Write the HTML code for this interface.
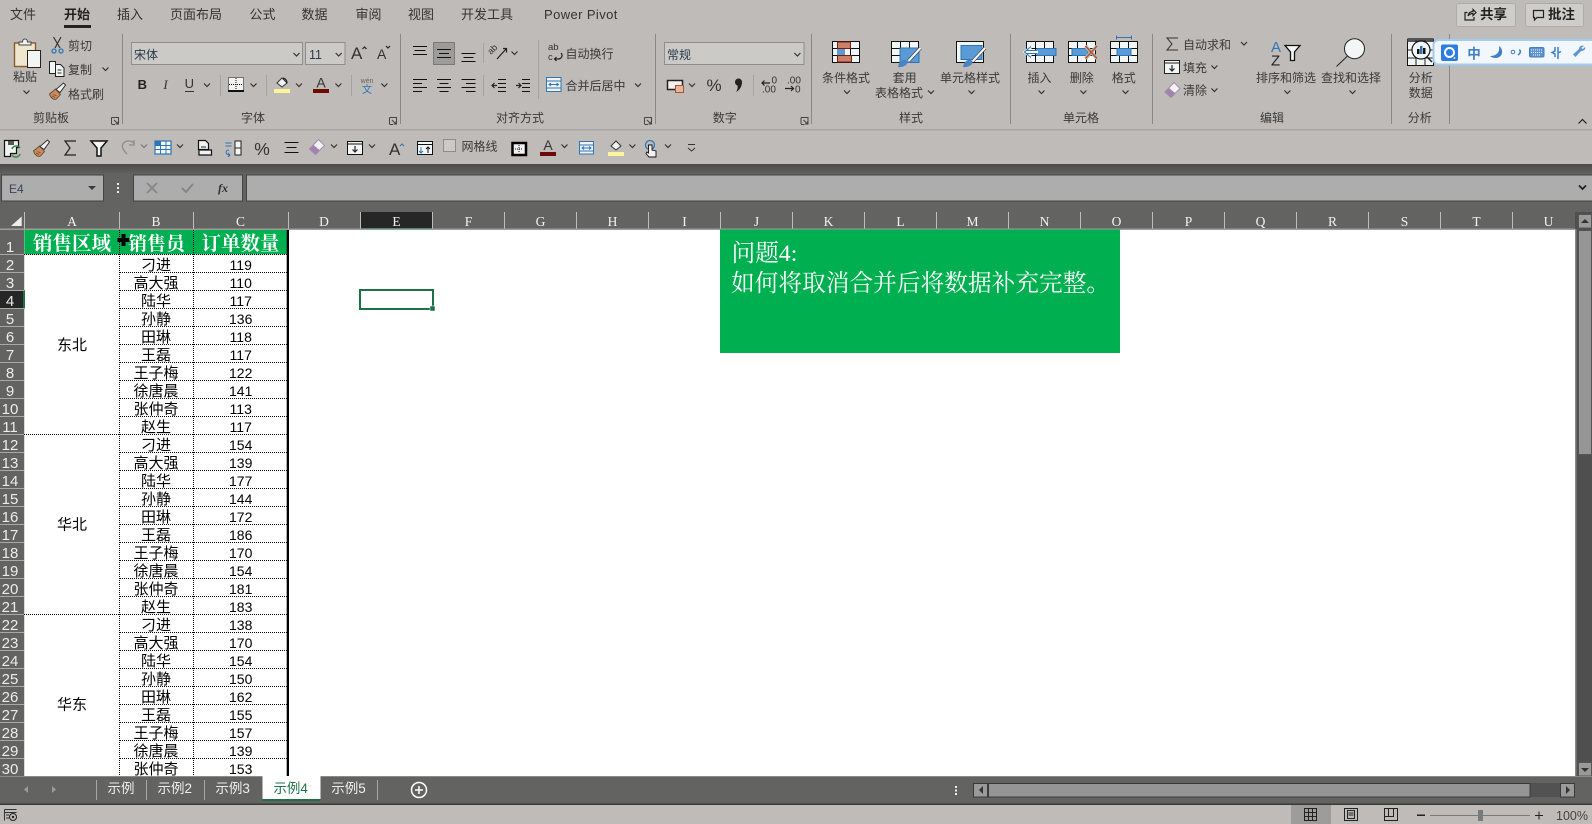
<!DOCTYPE html>
<html lang="zh"><head><meta charset="utf-8"><title>Excel</title>
<style>
html,body{margin:0;padding:0;width:1592px;height:824px;overflow:hidden;background:#bfbbb8}
svg{display:block;position:absolute;left:0;top:0}
text{font-family:"Liberation Sans","Noto Sans CJK SC",sans-serif}
.t{font-size:13px;fill:#333}
.r{font-size:12px;fill:#3a3a3a}
.m{text-anchor:middle}
.ch{font-family:"Liberation Serif",serif;font-size:13.5px;fill:#f2f2f2;text-anchor:middle}
.rh{font-size:15px;fill:#ececec;text-anchor:middle}
.cj{font-family:"WenQuanYi Zen Hei","Noto Sans CJK SC",sans-serif;font-size:15px;fill:#000;text-anchor:middle}
.nu{font-size:14px;fill:#000;text-anchor:middle}
.hd{font-family:"Liberation Serif","Noto Serif CJK SC",serif;font-weight:700;font-size:19.5px;fill:#fff;text-anchor:middle}
.gb{font-family:"Noto Serif CJK SC",serif;font-size:23.7px;fill:#fff}
.tb{font-size:13.5px;fill:#efefef;text-anchor:middle}
.l{stroke:#222;stroke-width:1.2;fill:none}
.k{stroke:#111;fill:none}
</style></head><body>
<svg width="1592" height="824" viewBox="0 0 1592 824" xmlns="http://www.w3.org/2000/svg">
<defs>
<path id="c" d="M-3 -1.500L0 1.500L3 -1.500" fill="none" stroke="#333" stroke-width="1.200"/>
<linearGradient id="sh" x1="0" y1="0" x2="0" y2="1"><stop offset="0" stop-color="#4a4a4a"/><stop offset="1" stop-color="#636362"/></linearGradient>
<path id="dl" d="M0.500 0.500H7.500V7.500M0.500 0.500V7M0.500 7.500H4M3 3L7 7M4.500 7H7V4.500" fill="none" stroke="#444" stroke-width="1"/>
<g id="br"><path d="M0 8l6-5 5 5.500-4 4.500c-3 1.500-6-1.500-7-5z" fill="#c98a5d" stroke="#6b4a32" stroke-width=".9"/><path d="M4 8.500l3 1.500M2.500 10l3 1.500" stroke="#7a4f30" stroke-width=".8"/><path d="M6.500 3.500l7.500-6.500 2 2-5.500 7.500z" fill="#f2f2f2" stroke="#333"/></g>
</defs>

<!-- backgrounds -->
<rect width="1592" height="824" fill="#bfbbb8"/>
<rect y="129" width="1592" height="1.500" fill="#a8a6a3"/>
<rect y="164" width="1592" height="48" fill="#636362"/>
<rect y="164" width="1592" height="10" fill="url(#sh)"/>

<!-- tabs -->
<text class="t" x="10" y="19">文件</text>
<text class="t" x="64" y="19" style="font-weight:700;fill:#222">开始</text>
<rect x="64" y="25" width="27" height="3" fill="#222"/>
<text class="t" x="117" y="19">插入</text>
<text class="t" x="170" y="19">页面布局</text>
<text class="t" x="249.500" y="19">公式</text>
<text class="t" x="301.500" y="19">数据</text>
<text class="t" x="355.500" y="19">审阅</text>
<text class="t" x="408" y="19">视图</text>
<text class="t" x="461" y="19">开发工具</text>
<text class="t" x="544" y="19" style="letter-spacing:.4px">Power Pivot</text>

<!-- share -->
<rect x="1456.500" y="3.500" width="59" height="23" rx="2" fill="#cfcdca" stroke="#aeaca9"/>
<rect x="1525.500" y="3.500" width="58" height="23" rx="2" fill="#cfcdca" stroke="#aeaca9"/>
<path d="M1467.500 12.500h-2.500v7.500h9v-3M1468 16c.5-3 2.500-4.500 5-4.500v-2l3 3-3 3v-2c-2 0-4 1-5 2.500" class="l" stroke-width="1"/>
<path d="M1533.500 10.500h10v7h-6.500l-2.500 2.500v-2.500h-1z" class="l"/>
<text x="1480" y="19" style="font-size:13.500px;font-weight:700;fill:#222">共享</text>
<text x="1548" y="19" style="font-size:13.500px;font-weight:700;fill:#222">批注</text>

<!-- group separators -->
<g stroke="#8a8886" stroke-width="1">
<path d="M122.500 34V124M400.500 34V124M655.500 34V124M811.500 34V124M1010.500 34V124M1152.500 34V124M1391.500 34V124M1449.500 34V124"/>
<path d="M220.500 75V96M266.500 75V96M351.500 75V96M483.500 43V63M483.500 75V96M538.500 40V99M753.500 75V96" stroke="#a5a3a0"/>
</g>

<!-- clipboard -->
<rect x="14.500" y="43" width="21" height="23.500" fill="#efe6cf" stroke="#8c5a2a" stroke-width="1.400"/>
<path d="M19 45v-3h3.500c0-4 5-4 5 0h3.500v3z" fill="#f2f2f2" stroke="#444" stroke-width="1"/>
<rect x="27.500" y="50.500" width="13" height="17" fill="#f3f5f5" stroke="#222"/>
<text class="r m" x="25" y="81">粘贴</text>
<use href="#c" x="26.500" y="92"/>
<path d="M53.500 37L60 48M61 37L55 48" stroke="#333" stroke-width="1.200" fill="none"/>
<circle cx="54" cy="51" r="2" fill="none" stroke="#2e75b6" stroke-width="1.300"/><circle cx="61" cy="51" r="2" fill="none" stroke="#2e75b6" stroke-width="1.300"/>
<text class="r" x="68" y="50">剪切</text>
<path d="M49.500 61.500h6v12h-6zM55.500 64.500h5l3.500 3.500v8.500h-8.500z" fill="#f3f5f5" stroke="#222"/><path d="M57.500 70h4M57.500 73h4" stroke="#333"/>
<text class="r" x="68" y="74">复制</text><use href="#c" x="105.500" y="69"/>
<use href="#br" x="49.500" y="86"/>
<text class="r" x="68" y="98.500">格式刷</text>

<!-- font -->
<rect x="131.500" y="42.500" width="171" height="22" fill="#cbcac7" stroke="#908e8c"/>
<rect x="305.500" y="42.500" width="39.500" height="22" fill="#cbcac7" stroke="#908e8c"/>
<text x="134" y="59" style="font-size:12px;fill:#2b3a4a">宋体</text><use href="#c" x="296.500" y="54.500"/>
<text x="309" y="59" style="font-size:12.500px;fill:#2b3a4a">11</text><use href="#c" x="338.700" y="54.500"/>
<text x="351" y="59" style="font-size:17px;fill:#333">A</text><path d="M362.500 49l2-2 2 2" class="l" stroke="#2e75b6" stroke-width="1"/>
<text x="377" y="59" style="font-size:14px;fill:#333">A</text><path d="M386 46l2 2 2-2" class="l" stroke="#2e75b6" stroke-width="1"/>
<text class="m" x="142.300" y="89" style="font-size:13px;font-weight:700;fill:#222">B</text>
<text class="m" x="165.600" y="89" style="font-size:13px;font-style:italic;fill:#333;font-family:'Liberation Serif',serif">I</text>
<text class="m" x="189.300" y="88" style="font-size:13px;fill:#333">U</text><path d="M185 91.500h9" stroke="#333"/>
<use href="#c" x="207" y="85"/>
<rect x="228.500" y="77.500" width="15" height="14" fill="#f2f2f2" stroke="#111" stroke-dasharray="1 1"/><path d="M236 78v13M229 84.500h14" stroke="#111" stroke-dasharray="1 1"/><rect x="228" y="90" width="16" height="2" fill="#111"/>
<use href="#c" x="253.500" y="85"/>
<path d="M277 83l5-5 5 5-5 4z" fill="#f2f2f2" stroke="#333"/><path d="M283 78c3 1 4 3 4 5" class="l" stroke="#2e75b6"/>
<rect x="274" y="89" width="16" height="4" fill="#fbf59e"/><use href="#c" x="299" y="85"/>
<text class="m" x="321" y="87.500" style="font-size:14px;fill:#333">A</text><rect x="313" y="89" width="16" height="4" fill="#6e0b00"/><use href="#c" x="338.400" y="85"/>
<text class="m" x="367" y="83" style="font-size:7px;fill:#666">wén</text><text class="m" x="367" y="93" style="font-size:10px;fill:#2e75b6">文</text><use href="#c" x="384.400" y="85"/>
<use href="#dl" x="111" y="117"/><use href="#dl" x="389" y="117"/><use href="#dl" x="644" y="117"/><use href="#dl" x="800.500" y="117"/>

<!-- alignment -->
<rect x="433.500" y="42.500" width="21" height="22" fill="#9e9c9a" stroke="#7b7a78"/>
<path class="k" d="M413 46.500h14M414.500 50.500h11M413 54.500h14M437 49.500h14M439 53.500h10M437 57.500h14M461.500 53.500h14M463.500 57.500h10M461.500 61.500h14"/>
<path class="k" d="M413 79.500h14M413 83.500h9M413 87.500h14M413 91.500h9M437 79.500h14M439.500 83.500h9M437 87.500h14M439.500 91.500h9M461.500 79.500h14M466 83.500h9.500M461.500 87.500h14M466 91.500h9.500"/>
<path d="M497 59l9-10M503 48.500h3.500v4" class="l" stroke="#2e75b6"/><text x="491" y="55" transform="rotate(-45 491 55)" style="font-size:9px;fill:#333">ab</text><use href="#c" x="514.500" y="53"/>
<path class="k" d="M498 79.500h8M498 83.500h8M498 87.500h8M498 91.500h8"/><path d="M497 85.500h-5M494.500 83l-2.500 2.500 2.500 2.500" class="l" stroke="#2e75b6"/>
<path class="k" d="M522 79.500h8M522 83.500h8M522 87.500h8M522 91.500h8"/><path d="M516 85.500h5M518.500 83l2.500 2.500-2.500 2.500" class="l" stroke="#2e75b6"/>
<text x="548" y="50" style="font-size:9.500px;fill:#333">ab</text><text x="548" y="60" style="font-size:9.500px;fill:#333">c</text>
<path d="M561 53c2 2 1 6-3 6h-3M556.500 57l-2 2 2 2" class="l" stroke="#2e75b6"/>
<text class="r" x="565.500" y="58">自动换行</text>
<rect x="546.500" y="77.500" width="14.500" height="14" fill="#f2f2f2" stroke="#2e75b6"/><path d="M546.500 81h14.500M546.500 88h14.500M549 84.500h9.500M551 83l-2 1.500 2 1.500M556.500 83l2 1.500-2 1.500" stroke="#2e75b6" fill="none"/>
<text class="r" x="565.500" y="90">合并后居中</text><use href="#c" x="638" y="85"/>

<!-- number -->
<rect x="664.500" y="42.500" width="139.500" height="22" fill="#cbcac7" stroke="#908e8c"/>
<text x="667" y="59" style="font-size:12px;fill:#2b3a4a">常规</text><use href="#c" x="797.400" y="54.500"/>
<rect x="667.500" y="80.500" width="15" height="9" fill="#f2f2f2" stroke="#222" stroke-width="1.500"/><rect x="675.500" y="85.500" width="8" height="7" fill="#e0b8a0" stroke="#b0502a"/><use href="#c" x="692" y="85"/>
<text class="m" x="714" y="91" style="font-size:17px;fill:#333">%</text>
<path d="M735 82a3.500 3.500 0 1 1 7 0c0 4-2 8-6 10 1.500-2.500 2-4 1.500-6.500a3.500 3.500 0 0 1-2.500-3.500z" fill="#222"/>
<text x="771.500" y="83.500" style="font-size:10px;fill:#333">0</text><text x="762" y="92.500" style="font-size:10px;fill:#333">.00</text><path d="M770 83h-8M764.500 80.500l-2.500 2.500 2.500 2.500" class="l" stroke="#2e75b6"/>
<text x="787" y="83.500" style="font-size:10px;fill:#333">.00</text><text x="795" y="92.500" style="font-size:10px;fill:#333">0</text><path d="M785 88.500h8.500M791 86l2.500 2.500-2.500 2.500" class="l" stroke="#2e75b6"/>

<!-- styles -->
<g>
<rect x="832.500" y="41.500" width="27" height="21" fill="#f2f6f6" stroke="#111"/>
<path d="M832.500 48.500h27M832.500 55.500h27M841.500 41.500v21M850.500 41.500v21" stroke="#111" fill="none"/>
<rect x="837.500" y="42" width="13" height="6.500" fill="#cc8069" stroke="#7a1b10"/><rect x="837.500" y="55.500" width="14" height="6.500" fill="#cc8069" stroke="#7a1b10"/><rect x="837" y="49" width="8" height="6" fill="#5b9bd5"/>
<rect x="891.500" y="41.500" width="27" height="21" fill="#f2f6f6" stroke="#111"/>
<path d="M891.500 48.500h27M891.500 55.500h27M900.500 41.500v21M909.500 41.500v21" stroke="#111"/>
<rect x="900" y="48" width="19" height="14.500" fill="#5b9bd5" stroke="#2e75b6"/>
<path d="M920.500 48l-12 13" stroke="#333" stroke-width="3.400"/><path d="M920.500 48l-12 13" stroke="#f6f6f6" stroke-width="2.200"/>
<path d="M898 67c1-5 4-8 8-7 2 1 2 3 0 5-2 1.500-5 2.500-8 2z" fill="#4a84c4"/>
<rect x="956.500" y="41.500" width="27" height="21" fill="#f2f6f6" stroke="#111"/>
<rect x="961" y="45.500" width="21" height="14" fill="#5b9bd5" stroke="#2e75b6"/>
<path d="M985 48l-12 13" stroke="#333" stroke-width="3.400"/><path d="M985 48l-12 13" stroke="#f6f6f6" stroke-width="2.200"/>
<path d="M963 67c1-5 4-8 8-7 2 1 2 3 0 5-2 1.500-5 2.500-8 2z" fill="#4a84c4"/>
<rect x="1026.500" y="41.500" width="27" height="21" fill="#f2f6f6" stroke="#111"/>
<path d="M1026.500 48.500h27M1026.500 55.500h27M1035.500 41.500v21M1044.500 41.500v21" stroke="#111"/>
<rect x="1037" y="48.500" width="19" height="7" fill="#5b9bd5" stroke="#2e75b6"/><path d="M1031 47l-6 5 6 5M1025 52h13" fill="none" stroke="#f2f6f6" stroke-width="3"/><path d="M1031 46.500l-6.500 5.500 6.500 5.500M1026 50.500h11M1026 53.500h11" fill="none" stroke="#2e75b6"/>
<rect x="1068.500" y="41.500" width="27" height="21" fill="#f2f6f6" stroke="#111"/>
<path d="M1068.500 48.500h27M1068.500 55.500h27M1077.500 41.500v21M1086.500 41.500v21" stroke="#111"/>
<rect x="1072" y="48.500" width="16" height="7" fill="#5b9bd5" stroke="#2e75b6"/><path d="M1085.500 46l11.500 12.500M1097 46l-11.500 12.500" stroke="#bfbbb8" stroke-width="3.500"/><path d="M1085.500 46l11.500 12.500M1097 46l-11.500 12.500" stroke="#b5522a" stroke-width="1.400"/>
<rect x="1110.500" y="41.500" width="27" height="21" fill="#f2f6f6" stroke="#111"/>
<path d="M1110.500 48.500h27M1110.500 55.500h27M1119.500 41.500v21M1128.500 41.500v21" stroke="#111"/>
<rect x="1117" y="48.500" width="14" height="7" fill="#5b9bd5" stroke="#2e75b6"/>
<path d="M1116.500 37.500h15M1116.500 35.500v4M1131.500 35.500v4" stroke="#2e75b6" fill="none"/>
</g>
<text class="r m" x="846" y="82">条件格式</text><use href="#c" x="847" y="92"/>
<text class="r m" x="904.600" y="82">套用</text><text class="r m" x="899" y="97">表格格式</text><use href="#c" x="931" y="92"/>
<text class="r m" x="970" y="82">单元格样式</text><use href="#c" x="971.500" y="92"/>
<text class="r m" x="1039.500" y="82">插入</text><use href="#c" x="1041.500" y="92"/>
<text class="r m" x="1081.700" y="82">删除</text><use href="#c" x="1083.400" y="92"/>
<text class="r m" x="1123.800" y="82">格式</text><use href="#c" x="1125.500" y="92"/>

<!-- editing -->
<path d="M1178 38h-11l5 6-5 6h11" fill="none" stroke="#333" stroke-width="1"/>
<text class="r" x="1183" y="49">自动求和</text><use href="#c" x="1244" y="43.500"/>
<rect x="1164.500" y="60.500" width="15" height="13" fill="#f2f6f6" stroke="#222"/><path d="M1164.500 63h15" stroke="#222"/><path d="M1172 65v6M1169.500 68.500l2.500 2.500 2.500-2.500" class="l" stroke="#2e75b6"/>
<text class="r" x="1183" y="72">填充</text><use href="#c" x="1214.400" y="67"/>
<path d="M1165 92l9-9.500 6 6-9 9z" fill="#f2f2f2" stroke="#a58cb0"/><path d="M1165 92l4-4 6 5-4 4.500z" fill="#a283ad"/>
<text class="r" x="1183" y="94.500">清除</text><use href="#c" x="1214.400" y="90"/>
<text x="1271" y="52" style="font-size:15px;fill:#2e75b6">A</text><text x="1271" y="65.500" style="font-size:15px;fill:#222">Z</text>
<path d="M1285 45.500h15l-5.500 6.500v8.500h-4v-8.500z" fill="#f2f6f6" stroke="#111" stroke-width="1.300"/>
<text class="r m" x="1286" y="82">排序和筛选</text><use href="#c" x="1287.400" y="92"/>
<circle cx="1354.500" cy="48.700" r="10" fill="#f2f6f6" stroke="#222"/><path d="M1347.500 56l-11 10.500" stroke="#222" fill="none"/>
<text class="r m" x="1351" y="82">查找和选择</text><use href="#c" x="1352.500" y="92"/>

<!-- analyze -->
<rect x="1407.500" y="39.500" width="26" height="26" fill="#f2f6f6" stroke="#111"/><rect x="1407.500" y="38" width="26" height="4" fill="#555"/>
<path d="M1407.500 50h26M1407.500 58h26M1416 40v26M1425 40v26" stroke="#222"/>
<circle cx="1421" cy="50" r="9" fill="#f2f6f6" stroke="#111" stroke-width="1.200"/><path d="M1427 57l5 5" stroke="#222" stroke-width="1.500"/>
<rect x="1417" y="49" width="2.500" height="5" fill="#111"/><rect x="1420" y="46" width="2.500" height="8" fill="#2e75b6"/><rect x="1423" y="48" width="2.500" height="6" fill="#111"/>
<text class="r m" x="1420.700" y="82">分析</text><text class="r m" x="1420.700" y="97">数据</text>
<path d="M1578.500 123.500l4-4 4 4" class="l"/>
<!-- group labels -->
<g><text class="r m" x="51" y="122">剪贴板</text><text class="r m" x="253" y="122">字体</text><text class="r m" x="520" y="122">对齐方式</text><text class="r m" x="724.700" y="122">数字</text><text class="r m" x="911" y="122">样式</text><text class="r m" x="1081" y="122">单元格</text><text class="r m" x="1272" y="122">编辑</text><text class="r m" x="1419.700" y="122">分析</text></g>

<!-- IME -->
<rect x="1433.500" y="40" width="170" height="24.500" rx="5" fill="#f1f7fc" stroke="#a3ccf2" stroke-width="2"/>
<rect x="1441" y="44.500" width="17" height="16.500" rx="2" fill="#2c7de2"/>
<circle cx="1449.500" cy="52.500" r="4.500" fill="none" stroke="#fff" stroke-width="2"/><circle cx="1454.500" cy="58" r="1" fill="#f7d84b"/>
<text class="m" x="1474" y="58.500" style="font-size:13.500px;font-weight:700;fill:#3f7fc4">中</text>
<path d="M1499 46c1 6-2 10-9 10 3 3 11 3 12-3 .5-3-1-6-3-7z" fill="#3f7fc4"/>
<circle cx="1513" cy="52" r="1.800" fill="none" stroke="#3f7fc4"/><path d="M1519 50c2 0 2 3-1 5" fill="none" stroke="#3f7fc4" stroke-width="1.500"/>
<rect x="1529.500" y="47.500" width="14.500" height="9.500" rx="1.500" fill="#5e92d0" stroke="#3f7fc4"/><path d="M1531 50h12M1531 52.500h12M1533 55h8" stroke="#eef5fb" stroke-dasharray="1 1"/>
<path d="M1555 47v4l-3 1.500 3 1.500v3M1558 47v12M1558 53l3-1.500" fill="none" stroke="#3f7fc4" stroke-width="1.500"/>
<path d="M1584 46c-2-1-5 0-5 3l-6 5.500 2.500 2.500 5.500-6c3 0 5-2 4-4l-2 2-2-1z" fill="#5e92d0"/>

<!-- QAT -->
<path d="M4.500 140.500h14v7h-2v6h-6v3h-6z" fill="#f2f2f2" stroke="#111" stroke-width="1.200"/><rect x="8" y="141" width="6" height="4" fill="#555"/>
<path d="M12 149a4.500 4.500 0 0 1 8-1M20 154a4.500 4.500 0 0 1-8 1" fill="none" stroke="#2d8a46" stroke-width="1.500"/>
<use href="#br" x="33.500" y="143"/>
<path d="M76 141h-11l5 7-5 7h11" fill="none" stroke="#222" stroke-width="1.200"/>
<path d="M91 141h16l-6 7v8h-4v-8z" fill="#f2f6f6" stroke="#111" stroke-width="1.500"/>
<path d="M134 144c-1-4-9-4-11 0-2 3 1 7 4 10M134 140v5h-5" fill="none" stroke="#8d8b89" stroke-width="1.300"/><use href="#c" x="144" y="146" opacity=".5"/>
<rect x="155" y="141" width="16" height="13" fill="#f2f6f6" stroke="#2e75b6" stroke-width="1.200"/><path d="M155 145.500h16M155 149.500h16M160.500 141v13M166 141v13" stroke="#2e75b6"/><rect x="155" y="141" width="5" height="5" fill="#2e75b6"/><use href="#c" x="180" y="146"/>
<path d="M198.500 140.500h7l3 3v6h-10zM199 150h12.500v5h-12.500z" fill="#f2f2f2" stroke="#111" stroke-width="1.200"/><path d="M201 147h5" stroke="#222"/>
<rect x="235" y="141" width="6" height="14" fill="#f2f6f6" stroke="#222"/><path d="M235 148h6" stroke="#222"/><path d="M225.500 143h6M225.500 146h6M229 150c-4 0-4 5 1 5M228 153l2 2-2 2" stroke="#2e75b6" fill="none"/>
<text class="m" x="262" y="155" style="font-size:17.500px;fill:#333">%</text>
<path class="k" d="M284.500 142.500h14M286.500 147.500h10M284.500 152.500h14"/>
<path d="M309.500 149l9-9.500 6 6-9 9z" fill="#f2f2f2" stroke="#a58cb0"/><path d="M309.500 149l4-4 6 5-4 4.500z" fill="#a283ad"/><use href="#c" x="334" y="146"/>
<rect x="347.500" y="141.500" width="15" height="13" fill="#f2f6f6" stroke="#111"/><path d="M347.500 144h15" stroke="#111"/><path d="M355 146v6M352.500 149.500l2.500 2.500 2.500-2.500" class="l" stroke="#2e75b6"/><use href="#c" x="372" y="146"/>
<text x="389" y="155" style="font-size:17px;fill:#333">A</text><path d="M400 146l2-2 2 2" fill="none" stroke="#2e75b6"/>
<rect x="417.500" y="141.500" width="15" height="13" fill="#f2f6f6" stroke="#111"/><path d="M417.500 144.500h15" stroke="#111"/><path d="M421 147v6M419 151l2 2 2-2" stroke="#2e75b6" fill="none"/><path d="M428 153v-6M426 149l2-2 2 2" stroke="#111" fill="none"/>
<rect x="443.500" y="139.500" width="12" height="12" fill="#cbcac7" stroke="#8f8d8b"/>
<text class="r" x="461.500" y="150.500">网格线</text>
<rect x="512.500" y="143" width="13.500" height="12" fill="#f2f2f2" stroke="#000" stroke-width="2.500"/><path d="M519 145v8M515 149h8" stroke="#111" stroke-dasharray="1 1"/>
<text class="m" x="548" y="150" style="font-size:14px;fill:#333">A</text><rect x="540" y="152" width="16" height="4" fill="#6e0b00"/><use href="#c" x="564.500" y="146"/>
<rect x="579.500" y="141.500" width="14" height="12.500" fill="#f2f2f2" stroke="#2e75b6"/><path d="M579.500 145h14M579.500 151h14M582 148h9M584 146.500l-2 1.500 2 1.500M589 146.500l2 1.500-2 1.500" stroke="#2e75b6" fill="none"/>
<path d="M611 146l5-5 5 5-5 4z" fill="#f2f2f2" stroke="#333"/><rect x="608" y="152" width="16" height="4" fill="#fbf59e"/><use href="#c" x="632.400" y="146"/>
<circle cx="650" cy="145" r="4.500" fill="none" stroke="#2e75b6" stroke-width="1.300"/><path d="M648.500 145v8l-1.500-1-1 1.500 3 3.500h7v-6l-4-1v-5z" fill="#f2f2f2" stroke="#111" stroke-width=".9"/><use href="#c" x="668" y="146"/>
<path d="M688 144.500h7M688 148l3.500 3 3.500-3" fill="none" stroke="#333"/>

<!-- formula bar -->
<rect x="1.500" y="175" width="102" height="26" fill="#adadad" stroke="#444"/>
<text x="9" y="193" style="font-size:12px;fill:#3a4656">E4</text><path d="M88 186h8l-4 4z" fill="#3a3a3a"/>
<rect x="117" y="183" width="2" height="2" fill="#eee"/><rect x="117" y="187" width="2" height="2" fill="#eee"/><rect x="117" y="191" width="2" height="2" fill="#eee"/>
<rect x="133.500" y="175" width="109" height="26" fill="#adadad" stroke="#444"/>
<path d="M147 183l10 10M157 183l-10 10" stroke="#868686" stroke-width="1.800"/>
<path d="M182 188l4 4 7-8" fill="none" stroke="#868686" stroke-width="2"/>
<text x="218" y="192" style="font:italic 700 12px 'Liberation Serif',serif;fill:#333">fx</text>
<rect x="246.500" y="175" width="1346" height="26" fill="#adadad" stroke="#444"/>
<path d="M1579 185.500l3.500 3.500 3.500-3.500" fill="none" stroke="#222" stroke-width="1.800"/>

<!-- headers -->
<rect y="212" width="1592" height="17" fill="#636362"/>
<rect y="229" width="24" height="547" fill="#636362"/>
<path d="M21.700 216.500V226H11z" fill="#eee"/>
<rect x="360.500" y="212" width="72" height="17" fill="#262626"/>
<rect x="360.500" y="228" width="72" height="2" fill="#1e7145"/>
<path stroke="#bdbdbd" d="M24.500 212V229M119.500 212V229M193.500 212V229M288.500 212V229M360.500 212V229M432.500 212V229M504.500 212V229M576.500 212V229M648.500 212V229M720.500 212V229M792.500 212V229M864.500 212V229M936.500 212V229M1008.500 212V229M1080.500 212V229M1152.500 212V229M1224.500 212V229M1296.500 212V229M1368.500 212V229M1440.500 212V229M1512.500 212V229"/>
<rect y="228.500" width="1575" height="1.500" fill="#9e9e9e"/>
<g>
<text class="ch" x="72" y="226">A</text><text class="ch" x="156" y="226">B</text><text class="ch" x="240.500" y="226">C</text><text class="ch" x="324" y="226">D</text><text class="ch" x="396.500" y="226">E</text><text class="ch" x="468.500" y="226">F</text><text class="ch" x="540.500" y="226">G</text><text class="ch" x="612.500" y="226">H</text><text class="ch" x="684.500" y="226">I</text><text class="ch" x="756.500" y="226">J</text><text class="ch" x="828.500" y="226">K</text><text class="ch" x="900.500" y="226">L</text><text class="ch" x="972.500" y="226">M</text><text class="ch" x="1044.500" y="226">N</text><text class="ch" x="1116.500" y="226">O</text><text class="ch" x="1188.500" y="226">P</text><text class="ch" x="1260.500" y="226">Q</text><text class="ch" x="1332.500" y="226">R</text><text class="ch" x="1404.500" y="226">S</text><text class="ch" x="1476.500" y="226">T</text><text class="ch" x="1548.500" y="226">U</text>
</g>

<!-- grid white -->
<rect x="24.500" y="230" width="1550.500" height="546" fill="#fff"/>
<!-- row header -->
<rect x="0" y="290.300" width="24.500" height="18" fill="#262626"/><rect x="23" y="290.300" width="2" height="18" fill="#1e7145"/>
<path stroke="#a8a8a8" d="M0 254.500H24M0 272.500H24M0 290.500H24M0 308.500H24M0 326.500H24M0 344.500H24M0 362.500H24M0 380.500H24M0 398.500H24M0 416.500H24M0 434.500H24M0 452.500H24M0 470.500H24M0 488.500H24M0 506.500H24M0 524.500H24M0 542.500H24M0 560.500H24M0 578.500H24M0 596.500H24M0 614.500H24M0 632.500H24M0 650.500H24M0 668.500H24M0 686.500H24M0 704.500H24M0 722.500H24M0 740.500H24M0 758.500H24"/>
<g>
<text class="rh" x="10" y="252">1</text><text class="rh" x="10" y="270">2</text><text class="rh" x="10" y="288">3</text><text class="rh" x="10" y="306">4</text><text class="rh" x="10" y="324">5</text><text class="rh" x="10" y="342">6</text><text class="rh" x="10" y="360">7</text><text class="rh" x="10" y="378">8</text><text class="rh" x="10" y="396">9</text><text class="rh" x="10" y="414">10</text><text class="rh" x="10" y="432">11</text><text class="rh" x="10" y="450">12</text><text class="rh" x="10" y="468">13</text><text class="rh" x="10" y="486">14</text><text class="rh" x="10" y="504">15</text><text class="rh" x="10" y="522">16</text><text class="rh" x="10" y="540">17</text><text class="rh" x="10" y="558">18</text><text class="rh" x="10" y="576">19</text><text class="rh" x="10" y="594">20</text><text class="rh" x="10" y="612">21</text><text class="rh" x="10" y="630">22</text><text class="rh" x="10" y="648">23</text><text class="rh" x="10" y="666">24</text><text class="rh" x="10" y="684">25</text><text class="rh" x="10" y="702">26</text><text class="rh" x="10" y="720">27</text><text class="rh" x="10" y="738">28</text><text class="rh" x="10" y="756">29</text><text class="rh" x="10" y="774">30</text>
</g>

<!-- table -->
<rect x="24.500" y="230" width="263" height="24.300" fill="#00b050"/>
<g stroke="#000" stroke-dasharray="1 1" stroke-width="1" shape-rendering="crispEdges">
<path d="M119.500 230V776M193.500 230V776"/>
<path d="M24 254.500H287M120 272.500H287M120 290.500H287M120 308.500H287M120 326.500H287M120 344.500H287M120 362.500H287M120 380.500H287M120 398.500H287M120 416.500H287M24 434.500H287M120 452.500H287M120 470.500H287M120 488.500H287M120 506.500H287M120 524.500H287M120 542.500H287M120 560.500H287M120 578.500H287M120 596.500H287M24 614.500H287M120 632.500H287M120 650.500H287M120 668.500H287M120 686.500H287M120 704.500H287M120 722.500H287M120 740.500H287M120 758.500H287"/>
</g>
<rect x="286.700" y="230" width="2.300" height="546" fill="#000"/>
<text class="hd" x="72" y="250">销售区域</text><text class="hd" x="156.500" y="250" style="font-size:19px">销售员</text><text class="hd" x="240.500" y="250">订单数量</text>
<path d="M121.500 234h4v4h4v4h-4v4h-4v-4h-4v-4h4z" fill="#000"/>
<g>
<text class="cj" x="72" y="350">东北</text><text class="cj" x="72" y="529.500">华北</text><text class="cj" x="72" y="709.500">华东</text>
<text class="cj" x="156" y="270">刁进</text><text class="cj" x="156" y="288">高大强</text><text class="cj" x="156" y="306">陆华</text><text class="cj" x="156" y="324">孙静</text><text class="cj" x="156" y="342">田琳</text><text class="cj" x="156" y="360">王磊</text><text class="cj" x="156" y="378">王子梅</text><text class="cj" x="156" y="396">徐唐晨</text><text class="cj" x="156" y="414">张仲奇</text><text class="cj" x="156" y="432">赵生</text>
<text class="cj" x="156" y="450">刁进</text><text class="cj" x="156" y="468">高大强</text><text class="cj" x="156" y="486">陆华</text><text class="cj" x="156" y="504">孙静</text><text class="cj" x="156" y="522">田琳</text><text class="cj" x="156" y="540">王磊</text><text class="cj" x="156" y="558">王子梅</text><text class="cj" x="156" y="576">徐唐晨</text><text class="cj" x="156" y="594">张仲奇</text><text class="cj" x="156" y="612">赵生</text>
<text class="cj" x="156" y="630">刁进</text><text class="cj" x="156" y="648">高大强</text><text class="cj" x="156" y="666">陆华</text><text class="cj" x="156" y="684">孙静</text><text class="cj" x="156" y="702">田琳</text><text class="cj" x="156" y="720">王磊</text><text class="cj" x="156" y="738">王子梅</text><text class="cj" x="156" y="756">徐唐晨</text><text class="cj" x="156" y="774">张仲奇</text>
<text class="nu" x="240.700" y="270">119</text><text class="nu" x="240.700" y="288">110</text><text class="nu" x="240.700" y="306">117</text><text class="nu" x="240.700" y="324">136</text><text class="nu" x="240.700" y="342">118</text><text class="nu" x="240.700" y="360">117</text><text class="nu" x="240.700" y="378">122</text><text class="nu" x="240.700" y="396">141</text><text class="nu" x="240.700" y="414">113</text><text class="nu" x="240.700" y="432">117</text>
<text class="nu" x="240.700" y="450">154</text><text class="nu" x="240.700" y="468">139</text><text class="nu" x="240.700" y="486">177</text><text class="nu" x="240.700" y="504">144</text><text class="nu" x="240.700" y="522">172</text><text class="nu" x="240.700" y="540">186</text><text class="nu" x="240.700" y="558">170</text><text class="nu" x="240.700" y="576">154</text><text class="nu" x="240.700" y="594">181</text><text class="nu" x="240.700" y="612">183</text>
<text class="nu" x="240.700" y="630">138</text><text class="nu" x="240.700" y="648">170</text><text class="nu" x="240.700" y="666">154</text><text class="nu" x="240.700" y="684">150</text><text class="nu" x="240.700" y="702">162</text><text class="nu" x="240.700" y="720">155</text><text class="nu" x="240.700" y="738">157</text><text class="nu" x="240.700" y="756">139</text><text class="nu" x="240.700" y="774">153</text>
</g>

<!-- selection -->
<rect x="360" y="290" width="73" height="19" fill="none" stroke="#1e7145" stroke-width="2"/>
<rect x="430" y="306" width="5" height="5" fill="#1e7145" stroke="#fff" stroke-width=".5"/>

<!-- green text box -->
<rect x="720" y="229.500" width="400" height="123.500" fill="#00b050"/>
<text class="gb" x="731.500" y="261">问题<tspan style="font-family:'Liberation Serif',serif">4:</tspan></text>
<text class="gb" x="731" y="291">如何将取消合并后将数据补充完整。</text>

<!-- scrollbars -->
<rect x="1575" y="212" width="17" height="564" fill="#4f4f4f"/>
<rect x="1575" y="229" width="1.500" height="547" fill="#8a8a8a"/>
<rect x="1578.500" y="214.500" width="13" height="13.500" fill="#9a9a9a" stroke="#555"/><path d="M1585 219l-4 4h8z" fill="#333"/>
<rect x="1578.500" y="230.500" width="13" height="224" fill="#959595" stroke="#555"/>
<rect x="1578.500" y="762.500" width="13" height="13.500" fill="#9a9a9a" stroke="#555"/><path d="M1581 768h8l-4 4z" fill="#333"/>
<rect y="776" width="1592" height="28" fill="#636362"/>
<rect y="776" width="1592" height="1" fill="#8a8a8a"/>
<rect y="803.500" width="1592" height="1.500" fill="#3a3a3a"/>
<rect x="973" y="783" width="602" height="14" fill="#525252"/>
<rect x="973.500" y="783.500" width="14" height="13.500" fill="#9a9a9a" stroke="#3a3a3a"/><path d="M983 786l-4 4 4 4z" fill="#333"/>
<rect x="988.500" y="783.500" width="541.500" height="13.500" fill="#959595" stroke="#3a3a3a"/>
<rect x="1560.500" y="783.500" width="14" height="13.500" fill="#9a9a9a" stroke="#3a3a3a"/><path d="M1566 786l4 4-4 4z" fill="#333"/>
<rect x="955" y="786" width="2" height="2" fill="#eee"/><rect x="955" y="789.500" width="2" height="2" fill="#eee"/><rect x="955" y="793" width="2" height="2" fill="#eee"/>

<!-- sheet tabs -->
<path d="M28 786l-4 3.500 4 3.500zM52 786l4 3.500-4 3.500z" fill="#9a9a9a"/>
<path stroke="#a8a8a8" d="M96.500 780V800M146.500 780V800M204.500 780V800M377.500 780V800"/>
<rect x="262.500" y="776" width="58" height="23" fill="#fff"/>
<rect x="262.500" y="799" width="58" height="2" fill="#1e7145"/>
<text class="tb" x="121" y="793">示例</text><text class="tb" x="174.800" y="793">示例2</text><text class="tb" x="232.600" y="793">示例3</text>
<text class="tb" x="290.700" y="793" style="fill:#217346">示例4</text><text class="tb" x="348.500" y="793">示例5</text>
<circle cx="419" cy="790" r="7.500" fill="none" stroke="#fff" stroke-width="1.500"/><path d="M415 790h8M419 786v8" stroke="#fff" stroke-width="1.500"/>

<!-- status bar -->
<rect y="805" width="1592" height="19" fill="#bfbbb8"/>
<path d="M4.500 809.500h12M4.500 809.500v11M4.500 812.500h12M6 815h3M6 818h3" stroke="#333" fill="none"/><circle cx="13" cy="817" r="3.500" fill="#bfbbb8" stroke="#222"/><circle cx="13" cy="817" r="1.200" fill="#222"/>
<rect x="1291" y="805" width="40" height="19" fill="#9e9c9a"/>
<path stroke="#222" fill="none" d="M1304.500 808.500h12v12h-12zM1308.500 808.500v12M1312.500 808.500v12M1304.500 812.500h12M1304.500 816.500h12"/>
<path stroke="#222" fill="none" d="M1344.500 808.500h13v12h-13zM1347.500 810.500h7v8h-7zM1348.500 813h5M1348.500 815h5"/>
<path stroke="#222" fill="none" d="M1384.500 808.500h13v12h-13zM1384.500 816.500h9v-8M1388.500 808.500v8"/>
<rect x="1417" y="814.500" width="8" height="1.500" fill="#222"/>
<rect x="1430" y="815" width="100" height="1" fill="#7a7a7a"/>
<rect x="1478" y="810" width="5" height="11" fill="#7a7a7a"/>
<path d="M1535 815.500h8M1539 811.500v8" stroke="#222"/>
<text x="1556" y="820" style="font-size:12.500px;fill:#444">100%</text>
</svg>
</body></html>
